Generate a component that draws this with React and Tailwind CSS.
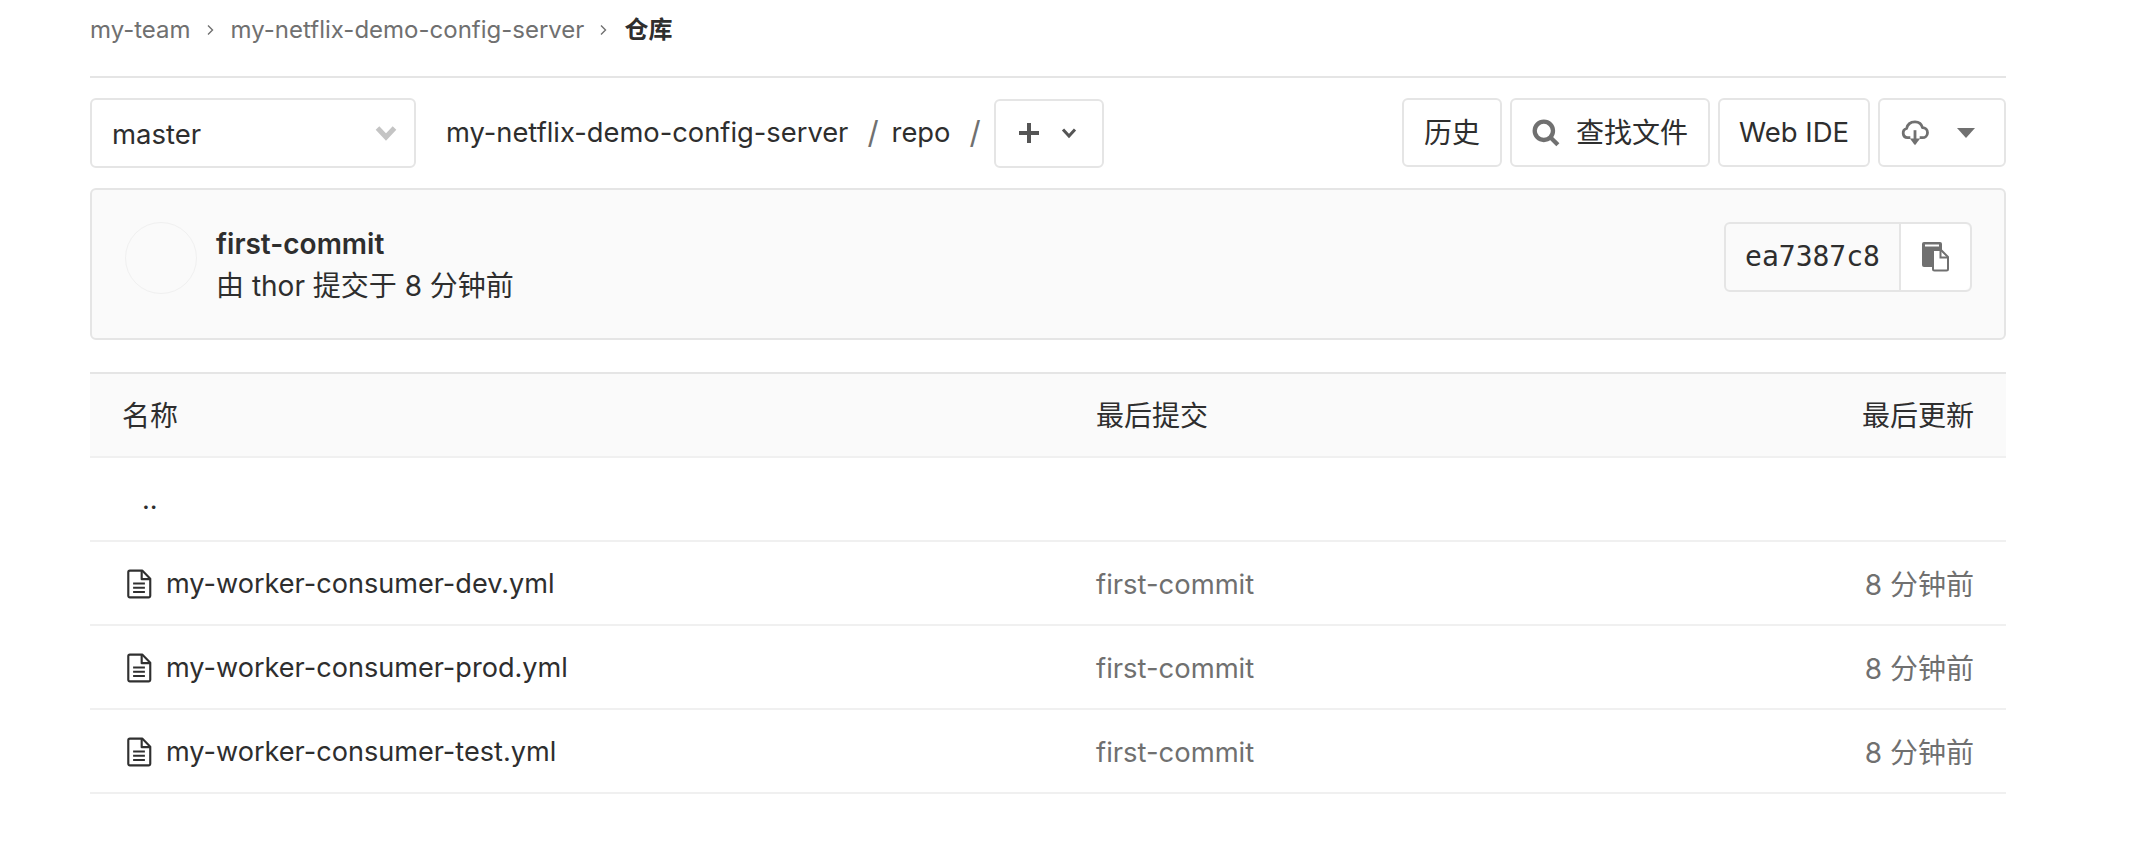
const sans = 'font-["Inter","Noto_Sans_CJK_SC",sans-serif]'

function Chevron() {
  return (
    <svg className="mx-[15px] h-[14px] w-[10px] text-[#707070]" viewBox="0 0 10 14" fill="none" stroke="currentColor" strokeWidth="1.4">
      <path d="M2 2.5 6.500 7 2 11.500" />
    </svg>
  )
}

function FileIcon() {
  return (
    <svg className="h-[30px] w-[26px] text-[#303030]" viewBox="0 0 24 28" fill="none" stroke="currentColor" strokeWidth="2">
      <path d="M3.5 1.5h11.5l7.5 7.5v16a1.5 1.5 0 0 1-1.5 1.5h-17.5a1.5 1.5 0 0 1-1.5-1.5v-22a1.5 1.5 0 0 1 1.500-1.500z" strokeLinejoin="round" />
      <path d="M14.500 1.500v8h8" strokeLinejoin="round" />
      <path d="M6.500 13.500h11M6.500 17.500h11M6.500 21.500h11" />
    </svg>
  )
}

function Button({ children, className = '' }) {
  return (
    <div className={`flex h-[69px] items-center justify-center rounded-[6px] border-2 border-[#e5e5e5] bg-white text-[#2e2e2e] ${className}`}>
      {children}
    </div>
  )
}

const files = ['my-worker-consumer-dev.yml', 'my-worker-consumer-prod.yml', 'my-worker-consumer-test.yml']

export default function App() {
  return (
    <div className={`min-h-[856px] bg-white px-[90px] text-[27.1px] text-[#2e2e2e] ${sans}`}>
      <div className="w-[1916px]">
        <nav className="flex h-[78px] items-center border-b-2 border-[#e5e5e5] pb-[16px] text-[24px] text-[#707070]">
          <span>my-team</span>
          <Chevron />
          <span>my-netflix-demo-config-server</span>
          <Chevron />
          <span className="font-semibold text-[#2e2e2e]">仓库</span>
        </nav>

        <div className="mt-[20px] flex h-[70px] items-center">
          <div className="flex h-[70px] w-[326px] items-center justify-between rounded-[6px] border-2 border-[#e5e5e5] pl-[20px] pr-[17px] text-[27.5px]">
            <span className="pt-[3px]">master</span>
            <svg className="h-[16px] w-[22px] text-[#c4c4c4]" viewBox="0 0 22 16" fill="none" stroke="currentColor" strokeWidth="5">
              <path d="M2.500 3 11 12l8.500-9" />
            </svg>
          </div>
          <span className="ml-[30px] text-[27.3px]">my-netflix-demo-config-server</span>
          <span className="ml-[19px] text-[31px] text-[#707070]">/</span>
          <span className="ml-[13px] text-[27.3px]">repo</span>
          <span className="ml-[19px] text-[31px] text-[#707070]">/</span>
          <Button className="ml-[13px] w-[110px] gap-[20px] pr-[2px]">
            <svg className="h-[22px] w-[22px] text-[#555]" viewBox="0 0 22 22" fill="none" stroke="currentColor" strokeWidth="4">
              <path d="M11 1v20M1 11h20" />
            </svg>
            <svg className="h-[12px] w-[18px] text-[#555]" viewBox="0 0 16 12" fill="none" stroke="currentColor" strokeWidth="3">
              <path d="M2 2.500 8 9l6-6.500" />
            </svg>
          </Button>
          <div className="ml-auto -mt-[1px] flex gap-[8px] text-[28px]">
            <Button className="w-[100px]">历史</Button>
            <Button className="w-[200px] gap-[16px]">
              <svg className="h-[28px] w-[28px] text-[#707070]" viewBox="0 0 26 26" fill="none" stroke="currentColor" strokeWidth="4">
                <circle cx="11" cy="11" r="8.500" />
                <path d="m17 17 7 7" />
              </svg>
              <span>查找文件</span>
            </Button>
            <Button className="w-[152px] text-[27.5px]">Web IDE</Button>
            <Button className="w-[128px] gap-[28px] pr-[8px]">
              <svg className="h-[28px] w-[28px] text-[#707070]" viewBox="0 0 30 28" fill="none" stroke="currentColor" strokeWidth="3">
                <path d="M10 19H7a5 5 0 0 1-1-9.800C7 4 11 2 15 2s7 2 8 6.200A5 5 0 0 1 23 19h-3" strokeLinejoin="round" />
                <path d="M15 11v14" />
                <path d="M9.500 20 15 27l5.500-7z" fill="currentColor" stroke="none" />
              </svg>
              <svg className="h-[10px] w-[18px] text-[#707070]" viewBox="0 0 18 10" fill="currentColor">
                <path d="M0 0h18l-9 10z" />
              </svg>
            </Button>
          </div>
        </div>

        <div className="mt-[20px] flex h-[152px] items-start justify-between rounded-[6px] border-2 border-[#e5e5e5] bg-[#fafafa] pl-[33px] pr-[32px] pt-[32px]">
          <div className="flex items-start gap-[19px]">
            <div className="h-[72px] w-[72px] rounded-full border border-[#f0f0f0] bg-[#fafafa]" />
            <div className="pt-[1px]">
              <div className="text-[28px] font-semibold leading-[42px]">first-commit</div>
              <div className="text-[28px] leading-[42px]">由 thor 提交于 8 分钟前</div>
            </div>
          </div>
          <div className="flex h-[70px] items-stretch rounded-[6px] border-2 border-[#e5e5e5]">
            <div className="flex w-[175px] items-center justify-center border-r-2 border-[#e5e5e5] font-['DejaVu_Sans_Mono',monospace] text-[28px]">
              ea7387c8
            </div>
            <div className="flex w-[69px] items-center justify-center rounded-r-[6px] bg-white">
              <svg className="h-[30px] w-[28px]" viewBox="0 0 28 30">
                <rect x="0" y="0" width="20" height="25" rx="2" fill="#707070" />
                <rect x="3" y="2.500" width="14" height="2" fill="#fff" />
                <path d="M11 8h8l7 7v12a1.500 1.500 0 0 1-1.500 1.500H12.500A1.500 1.500 0 0 1 11 27z" fill="#fff" stroke="#707070" strokeWidth="2" strokeLinejoin="round" />
                <path d="M18.500 8v7.500H26" fill="none" stroke="#707070" strokeWidth="2" />
              </svg>
            </div>
          </div>
        </div>

        <div className="mt-[32px] border-t-2 border-[#e5e5e5]">
          <div className="flex h-[84px] items-center justify-between border-b-2 border-[#f0f0f0] bg-[#fafafa] px-[32px] pt-[2px] text-[28px]">
            <span className="w-[974px]">名称</span>
            <span className="flex-1">最后提交</span>
            <span>最后更新</span>
          </div>
          <div className="flex h-[84px] items-center border-b-2 border-[#f0f0f0] pl-[52px] pt-[3px]">..</div>
          {files.map((name) => (
            <div className="flex h-[84px] items-center border-b-2 border-[#f0f0f0] px-[32px] pt-[3px]" key={name}>
              <div className="flex w-[974px] items-center gap-[14px] pl-[4px]">
                <FileIcon />
                <span>{name}</span>
              </div>
              <span className="flex-1 text-[27.4px] text-[#707070]">first-commit</span>
              <span className="text-[28px] text-[#707070]">8 分钟前</span>
            </div>
          ))}
        </div>
      </div>
    </div>
  )
}
